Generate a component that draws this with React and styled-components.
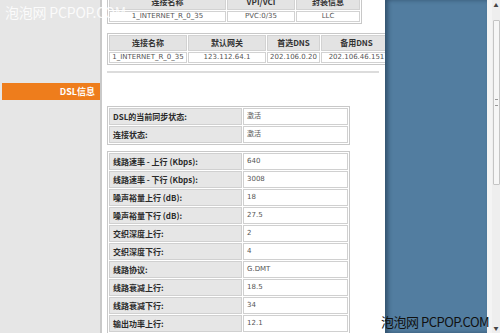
import React from "react";
import styled, { createGlobalStyle } from "styled-components";

const GlobalStyle = createGlobalStyle`
  html, body {
    margin: 0;
    padding: 0;
    width: 500px;
    height: 333px;
    overflow: hidden;
    background: #fff;
  }
`;

const topConn = {
  heads: ["连接名称", "VPI/VCI", "封装信息"],
  widths: [115, 66, 62],
  row: ["1_INTERNET_R_0_35", "PVC:0/35", "LLC"],
};

const dnsConn = {
  heads: ["连接名称", "默认网关", "首选DNS", "备用DNS"],
  widths: [76, 76, 51, 69],
  row: ["1_INTERNET_R_0_35", "123.112.64.1", "202.106.0.20", "202.106.46.151"],
};

const status = [
  ["DSL的当前同步状态:", "激活"],
  ["连接状态:", "激活"],
];

const lineInfo = [
  ["线路速率 - 上行 (Kbps):", "640"],
  ["线路速率 - 下行 (Kbps):", "3008"],
  ["噪声裕量上行 (dB):", "18"],
  ["噪声裕量下行 (dB):", "27.5"],
  ["交织深度上行:", "2"],
  ["交织深度下行:", "4"],
  ["线路协议:", "G.DMT"],
  ["线路衰减上行:", "18.5"],
  ["线路衰减下行:", "34"],
  ["输出功率上行:", "12.1"],
];

const App = () => {
  return (
    <Page>
      <GlobalStyle />
      <Sidebar>
        <MenuItem>DSL信息</MenuItem>
      </Sidebar>
      <Main>
        <GridTable $width={243} $top={-8}>
          <tbody>
            <tr>
              {topConn.heads.map((h, i) => (
                <Head key={h} style={{ width: topConn.widths[i] }}>{h}</Head>
              ))}
            </tr>
            <tr>
              {topConn.row.map((c) => (
                <Data key={c}>{c}</Data>
              ))}
            </tr>
          </tbody>
        </GridTable>
        <GridTable $width={272} $top={9}>
          <tbody>
            <tr>
              {dnsConn.heads.map((h, i) => (
                <Head key={h} style={{ width: dnsConn.widths[i] }}>{h}</Head>
              ))}
            </tr>
            <tr>
              {dnsConn.row.map((c) => (
                <Data key={c}>{c}</Data>
              ))}
            </tr>
          </tbody>
        </GridTable>
        <Rule />
        <InfoTable $top={33}>
          <tbody>
            {status.map(([k, v]) => (
              <tr key={k}>
                <Label>{k}</Label>
                <Value>{v}</Value>
              </tr>
            ))}
          </tbody>
        </InfoTable>
        <InfoTable $top={6}>
          <tbody>
            {lineInfo.map(([k, v]) => (
              <tr key={k}>
                <Label>{k}</Label>
                <Value>{v}</Value>
              </tr>
            ))}
          </tbody>
        </InfoTable>
      </Main>
      <BluePanel />
      <Gutter />
      <Scrollbar>
        <Arrow>▲</Arrow>
        <Thumb>
          <Grip />
        </Thumb>
        <Arrow>▼</Arrow>
      </Scrollbar>
      <MarkTop>泡泡网 PCPOP.COM</MarkTop>
      <MarkBottom>泡泡网 PCPOP.COM</MarkBottom>
    </Page>
  );
};

export default App;

const Page = styled.div`
  position: relative;
  display: flex;
  width: 500px;
  height: 333px;
  overflow: hidden;
  font-family: "Noto Sans CJK SC", "Noto Sans", sans-serif;
`;

const Sidebar = styled.div`
  width: 102px;
  flex-shrink: 0;
  background: #e6e6e6;
  border-right: 2px solid #c9c9c9;
  padding-top: 83px;
  box-sizing: border-box;
`;

const MenuItem = styled.div`
  margin-left: 2px;
  height: 17px;
  background: #ee7d1c;
  color: #fff;
  font-size: 9px;
  font-weight: 700;
  line-height: 17px;
  text-align: right;
  padding-right: 5px;
`;

const Main = styled.div`
  width: 283px;
  flex-shrink: 0;
  background: #fff;
  padding-left: 5px;
  box-sizing: border-box;
  display: flex;
  flex-direction: column;
  align-items: flex-start;
`;

const GridTable = styled.table`
  width: ${(p) => p.$width}px;
  margin-top: ${(p) => p.$top}px;
  border: 1px solid #c8c8c8;
  border-collapse: separate;
  border-spacing: 1px;
  table-layout: fixed;
  flex-shrink: 0;
`;

const Head = styled.th`
  height: 14px;
  padding: 0;
  background: #e3e3e3;
  border: 1px solid #d2d2d2;
  color: #333;
  font-size: 8px;
  font-weight: 700;
  line-height: 14px;
  text-align: center;
`;

const Data = styled.td`
  height: 9px;
  padding: 0;
  border: 1px solid #d2d2d2;
  color: #555;
  font-family: "DejaVu Sans", sans-serif;
  font-size: 7px;
  line-height: 9px;
  text-align: center;
  white-space: nowrap;
`;

const Rule = styled.div`
  width: 272px;
  height: 2px;
  margin-top: 6px;
  background: #dcdcdc;
  flex-shrink: 0;
`;

const InfoTable = styled.table`
  width: 243px;
  margin-top: ${(p) => p.$top}px;
  border: 1px solid #c8c8c8;
  border-collapse: separate;
  border-spacing: 1px;
  table-layout: fixed;
  flex-shrink: 0;
`;

const Label = styled.td`
  width: 128px;
  height: 15px;
  padding: 0 0 0 3px;
  background: #e6e6e6;
  border: 1px solid #d0d0d0;
  color: #2a2a2a;
  font-size: 8px;
  font-weight: 700;
  line-height: 15px;
  white-space: nowrap;
`;

const Value = styled.td`
  height: 15px;
  padding: 0 0 0 3px;
  background: #fff;
  border: 1px solid #d0d0d0;
  color: #555;
  font-family: "DejaVu Sans", "Noto Sans CJK SC", sans-serif;
  font-size: 7px;
  line-height: 15px;
`;

const BluePanel = styled.div`
  width: 102px;
  flex-shrink: 0;
  background: #527da0;
  box-shadow: inset 3px 0 4px rgba(20, 40, 60, 0.5);
`;

const Gutter = styled.div`
  width: 5px;
  flex-shrink: 0;
  background: #f4f4f4;
`;

const Scrollbar = styled.div`
  width: 8px;
  flex-shrink: 0;
  background: #eeeeee;
  display: flex;
  flex-direction: column;
  align-items: center;
`;

const Arrow = styled.div`
  height: 10px;
  font-size: 5px;
  line-height: 10px;
  color: #444;
  &:last-child {
    margin-top: auto;
  }
`;

const Thumb = styled.div`
  margin-top: 10px;
  width: 7px;
  height: 165px;
  background: #f6f6f6;
  border: 1px solid #c4c4c4;
  border-radius: 1px;
  box-sizing: border-box;
  display: flex;
  align-items: center;
  justify-content: center;
`;

const Grip = styled.div`
  width: 3px;
  height: 5px;
  border-top: 1px solid #999;
  border-bottom: 1px solid #999;
`;

const MarkTop = styled.div`
  position: absolute;
  left: 5px;
  top: 2px;
  color: rgba(255, 255, 255, 0.85);
  font-family: "Noto Sans CJK SC", "Liberation Sans", sans-serif;
  font-size: 14px;
  letter-spacing: -0.2px;
  white-space: nowrap;
`;

const MarkBottom = styled.div`
  position: absolute;
  left: 381px;
  top: 312px;
  color: #111;
  font-family: "Noto Sans CJK SC", "Liberation Sans", sans-serif;
  font-size: 13px;
  letter-spacing: -0.5px;
  white-space: nowrap;
`;
